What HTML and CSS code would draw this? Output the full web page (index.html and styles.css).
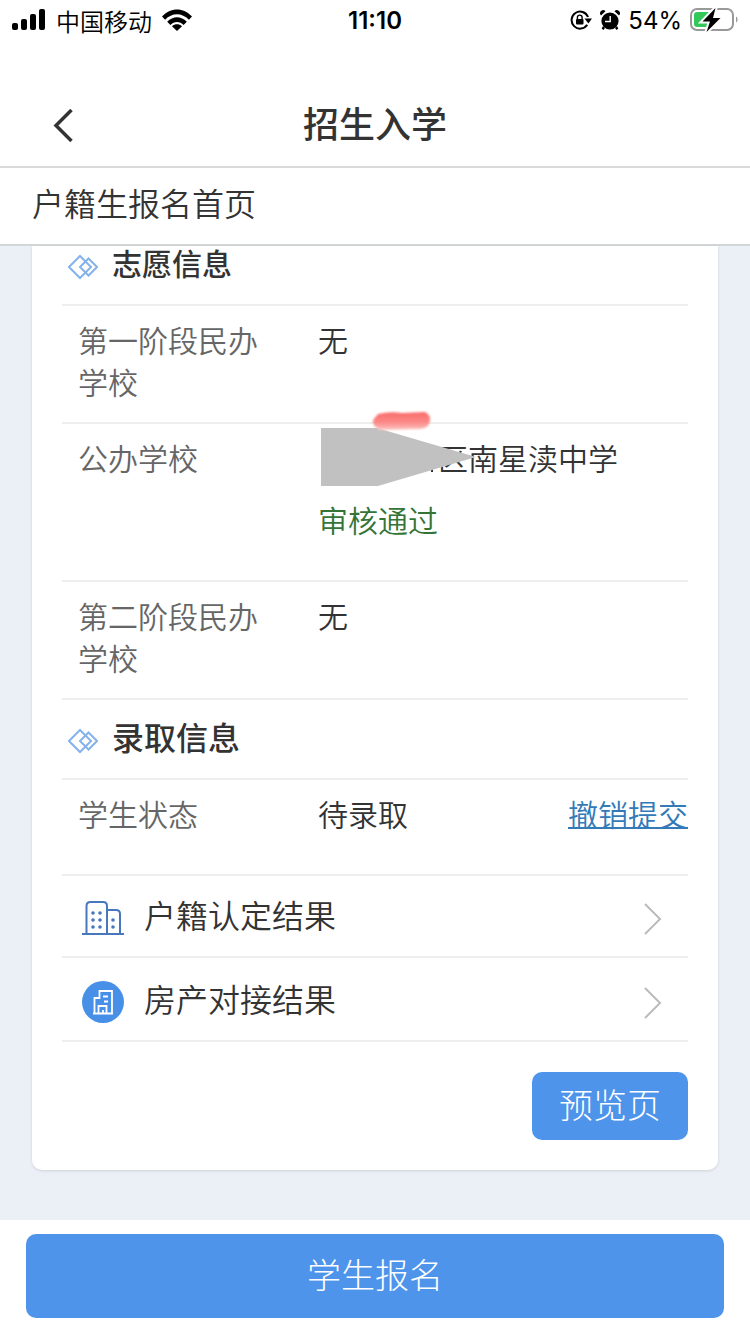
FILE: index.html
```html
<!DOCTYPE html>
<html lang="zh-CN">
<head>
<meta charset="utf-8">
<meta name="viewport" content="width=device-width, initial-scale=1">
<title>招生入学</title>
<link rel="stylesheet" href="styles.css">
</head>
<body>
<div class="page">
  <div class="status">
    <div class="status-side">
      <svg class="signal" width="34" height="22" viewBox="0 0 34 22" aria-hidden="true"><rect x="0" y="14" width="6" height="7" rx="2"/><rect x="9" y="10" width="6" height="11" rx="2"/><rect x="18" y="5" width="6" height="16" rx="2"/><rect x="27" y="0" width="6" height="21" rx="2"/></svg>
      <span class="carrier">中国移动</span>
      <svg class="wifi" width="30" height="22" viewBox="0 0 30 22" aria-hidden="true"><path d="M0 7.6C8.500-1.800 21.500-1.800 30 7.600L26.900 10.800C20 3.400 10 3.400 3.100 10.800Z"/><path d="M5.200 12.800C11 6.700 19 6.700 24.800 12.800L21.600 16C18 12.100 12 12.100 8.400 16Z"/><path d="M10 17.300C13 14.700 17 14.700 20 17.300L15 22Z"/></svg>
    </div>
    <time class="clock">11:10</time>
    <div class="status-side status-right">
      <svg width="22" height="20" viewBox="0 0 22 20" aria-hidden="true"><path d="M17.200 14.800A8.500 8.500 0 1 1 18 7" fill="none" stroke="#000" stroke-width="2"/><path d="M14.500 8.500H22L18.400 13.600Z"/><rect x="6" y="9" width="7.500" height="5.600" rx="1"/><path d="M7.400 9.500V7.500a2.350 2.350 0 0 1 4.700 0V9.500" fill="none" stroke="#000" stroke-width="1.400"/></svg>
      <svg width="20" height="20" viewBox="0 0 20 20" aria-hidden="true"><circle cx="10" cy="11" r="8.600"/><path d="M1 5.500A3 3 0 0 1 5.500 1.200ZM19 5.500A3 3 0 0 0 14.500 1.200ZM3 16l2 2-1.600 2L1.700 18.500ZM17 16l-2 2 1.600 2 1.700-1.500Z"/><path d="M10.200 6V11.500H5" fill="none" stroke="#fff" stroke-width="1.400"/></svg>
      <span class="percent">54%</span>
      <svg width="48" height="26" viewBox="0 0 48 26" aria-hidden="true"><rect x="1" y="2" width="42" height="21" rx="6" fill="#fff" stroke="#999" stroke-width="2"/><rect x="4" y="5" width="20" height="15" rx="3" fill="#34c759"/><path d="M46 9.500c2 .8 2 5.200 0 6Z" fill="#999"/><path d="M25.500 1L12.500 14.500H20L16.500 25L30.500 11H23Z" stroke="#fff" stroke-width="4"/><path d="M25.500 1L12.500 14.500H20L16.500 25L30.500 11H23Z"/></svg>
    </div>
  </div>
  <header class="nav">
    <button class="back" type="button" aria-label="返回"><svg width="24" height="36" viewBox="0 0 24 36" aria-hidden="true"><path d="M19.500 3L4 18.500L19.500 34" fill="none" stroke="#333" stroke-width="3.500"/></svg></button>
    <h1 class="title">招生入学</h1>
  </header>
  <h2 class="subtitle">户籍生报名首页</h2>

  <main class="content">
    <section class="card">
      <h3 class="section section-first">
        <svg width="30" height="26" viewBox="0 0 30 26" aria-hidden="true"><path class="gem" d="M12 2L23 13L12 24L1 13ZM20.500 4.500L29 13L20.500 21.500L12 13Z"/></svg>
        <span>志愿信息</span>
      </h3>
      <dl class="rows">
        <div class="row"><dt>第一阶段民办学校</dt><dd>无</dd></div>
        <div class="row row-tall">
          <dt>公办学校</dt>
          <dd>
            <div class="school">区南星渎中学
              <svg class="cover" width="160" height="78" viewBox="0 0 160 78" aria-hidden="true"><defs><filter id="soft" x="-10%" y="-20%" width="120%" height="140%"><feGaussianBlur stdDeviation="1"/></filter><linearGradient id="ink" x1="0" y1="0" x2="0" y2="1"><stop offset="0" stop-color="#f96c6a"/><stop offset=".6" stop-color="#fb8c8a"/><stop offset="1" stop-color="#fcc6c4"/></linearGradient></defs><path d="M113 58h2v4h-2Z" fill="#333"/><path d="M3 18H59L158 47L60 76H3Z" fill="#c1c1c1"/><path d="M60 4Q72 1 84 3L107 2Q113 5 112 11Q110 19 102 19L62 20Q54 16 55 10Z" fill="url(#ink)" filter="url(#soft)"/></svg>
            </div>
            <div class="passed">审核通过</div>
          </dd>
        </div>
        <div class="row"><dt>第二阶段民办学校</dt><dd>无</dd></div>
      </dl>
      <h3 class="section">
        <svg width="30" height="26" viewBox="0 0 30 26" aria-hidden="true"><path class="gem" d="M12 2L23 13L12 24L1 13ZM20.500 4.500L29 13L20.500 21.500L12 13Z"/></svg>
        <span>录取信息</span>
      </h3>
      <dl class="rows">
        <div class="row row-tall"><dt>学生状态</dt><dd class="split"><span>待录取</span><a class="undo" href="#">撤销提交</a></dd></div>
      </dl>
      <nav>
        <a class="entry" href="#">
          <svg width="42" height="42" viewBox="0 0 42 42" aria-hidden="true"><g fill="none" stroke="#4877bd" stroke-width="2"><path d="M4.500 37V9q0-4 4-4H21q4 0 4 4V37M25 13H34q4 0 4 4V37"/><path d="M0 37H42"/></g><g fill="#4877bd"><circle cx="11" cy="16" r="1.800"/><circle cx="18" cy="16" r="1.800"/><circle cx="11" cy="23" r="1.800"/><circle cx="18" cy="23" r="1.800"/><circle cx="11" cy="30" r="1.800"/><circle cx="18" cy="30" r="1.800"/><circle cx="31" cy="23" r="1.800"/><circle cx="31" cy="30" r="1.800"/></g></svg>
          <span class="entry-text">户籍认定结果</span>
          <svg class="chevron" width="20" height="32" viewBox="0 0 20 32" aria-hidden="true"><path d="M1 2L16 17L1 32"/></svg>
        </a>
        <a class="entry entry-last" href="#">
          <svg width="42" height="42" viewBox="0 0 42 42" aria-hidden="true"><circle cx="21" cy="21" r="21" fill="#488fe8"/><g fill="none" stroke="#fff" stroke-width="1.800"><path d="M11 32.500H31M12.500 32V17H17.500V10H30V32M16.500 32V25H24.500V32"/><path d="M21 15.500H26M22 20.500H26M21 29V32"/></g></svg>
          <span class="entry-text">房产对接结果</span>
          <svg class="chevron" width="20" height="32" viewBox="0 0 20 32" aria-hidden="true"><path d="M1 2L16 17L1 32"/></svg>
        </a>
      </nav>
      <div class="actions"><button class="preview" type="button">预览页</button></div>
    </section>
  </main>
  <footer class="footer"><button class="submit" type="button">学生报名</button></footer>
</div>
</body>
</html>
```
FILE: styles.css
```css
* { box-sizing: border-box; }
body {
  margin: 0;
  background: #fff;
  color: #333;
  font-family: "Noto Sans CJK SC", sans-serif;
  font-weight: 350;
}
h1, h2, h3, dl, dd { margin: 0; }
button { border: 0; padding: 0; font-family: inherit; cursor: pointer; }
a { color: inherit; text-decoration: none; }
svg { display: block; flex: none; }
.page { min-height: 100vh; display: flex; flex-direction: column; }

.status {
  display: grid;
  grid-template-columns: 1fr auto 1fr;
  align-items: center;
  height: 40px;
  padding: 0 12px;
  color: #000;
  font-size: 24px;
}
.status-side { display: flex; align-items: center; gap: 10px; }
.status-right { gap: 8px; justify-content: flex-end; }
.clock { font-family: Inter, sans-serif; font-weight: 600; }
.percent { font-family: Inter, sans-serif; font-weight: 400; }

.nav {
  display: grid;
  grid-template-columns: 1fr auto 1fr;
  align-items: center;
  margin-top: 40px;
  padding: 0 52px;
  height: 88px;
  border-bottom: 2px solid #d9dadb;
}
.back { width: 24px; padding-top: 4px; background: none; }
.title { padding-bottom: 2px; font-size: 36px; font-weight: 500; line-height: 48px; }
.subtitle {
  padding: 10px 32px 18px;
  border-bottom: 2px solid #d3d6d7;
  font-size: 32px;
  font-weight: inherit;
  line-height: 48px;
}

.content { flex: 1; padding: 0 32px 50px; background: #ebeff6; }
.card {
  padding: 0 30px 30px;
  border-radius: 0 0 10px 10px;
  background: #fff;
  box-shadow: 0 1px 3px rgba(0, 0, 0, 0.12);
}
.section {
  display: flex;
  align-items: center;
  gap: 14px;
  height: 80px;
  padding: 4px 6px 0;
  border-bottom: 2px solid #eee;
  font-size: 32px;
  font-weight: 500;
  line-height: 42px;
}
.section span { padding-bottom: 10px; }
.section-first { height: 60px; padding: 0 6px 16px; font-size: 30px; }
.gem { fill: none; stroke: #85b2ea; stroke-width: 2; }

.row {
  display: grid;
  grid-template-columns: 180px 1fr;
  gap: 60px;
  padding: 12px 0 20px 16px;
  border-bottom: 2px solid #eee;
  font-size: 30px;
  line-height: 42px;
}
.row-tall { padding-bottom: 40px; }
.row dt { color: #666; }
.school { position: relative; padding-left: 120px; }
.cover { position: absolute; left: 0; top: -26px; }
.passed { margin-top: 20px; color: #347436; }
.split { display: flex; justify-content: space-between; }
.undo {
  color: #337ab7;
  text-decoration: underline;
  text-decoration-thickness: 2px;
}

.entry {
  display: flex;
  align-items: center;
  gap: 20px;
  height: 82px;
  padding: 4px 24px 0 20px;
  border-bottom: 2px solid #eee;
  font-size: 32px;
  line-height: 48px;
}
.entry-last { height: 84px; padding-top: 6px; }
.entry-text { flex: 1; padding-bottom: 8px; }
.chevron { overflow: visible; fill: none; stroke: #bbb; stroke-width: 2; }
.actions { display: flex; justify-content: flex-end; padding-top: 30px; }
.preview, .submit {
  border-radius: 10px;
  background: #4e94eb;
  color: #fff;
  font-size: 34px;
  font-weight: 300;
  line-height: 48px;
}
.preview { padding: 8px 27px 12px; }
.footer { padding: 14px 26px 16px; }
.submit { display: block; width: 100%; padding: 16px 18px 20px; }
```
